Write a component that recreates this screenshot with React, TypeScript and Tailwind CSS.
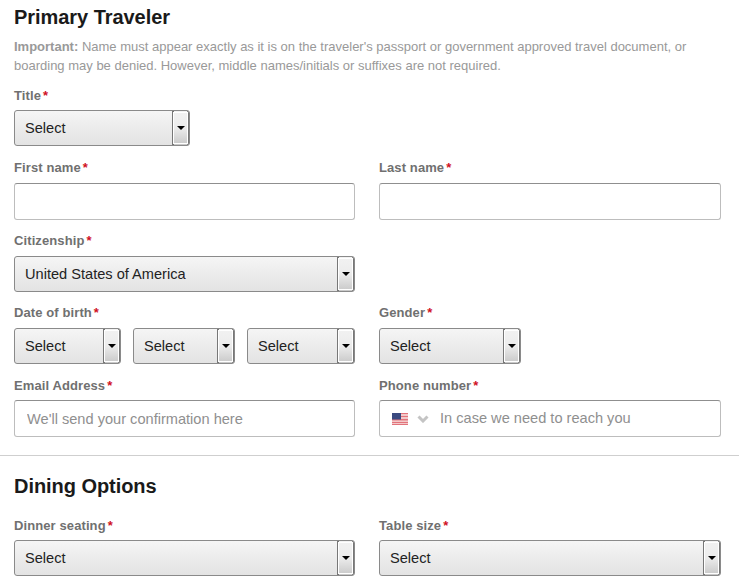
import type { ReactNode } from 'react'

function Label({ children }: { children: ReactNode }) {
  return (
    <div className="h-[16px] text-[13px] leading-[18px] font-bold tracking-[0.1px] text-[#707070]">
      {children}
      <span className="ml-[2px] text-[#d0101f]">*</span>
    </div>
  )
}

function Select({ value = 'Select', className = '' }: { value?: string; className?: string }) {
  return (
    <div
      className={`flex h-[36px] items-stretch overflow-hidden rounded-[3px] border border-[#8a8a8a] bg-gradient-to-b from-[#f5f5f5] to-[#e3e3e3] ${className}`}
    >
      <span className="flex-1 pl-[10px] text-[14.6px] leading-[34px] text-[#222]">{value}</span>
      <span className="flex w-[17px] items-center justify-center border-x-2 border-[#fff] border-l-[#777] border-r-[#777] bg-gradient-to-b from-[#f2f2f2] via-[#ececec] to-[#c8c8c8] outline outline-1 -outline-offset-2 outline-white">
        <span className="h-0 w-0 border-x-[4px] border-t-[4px] border-x-transparent border-t-black" />
      </span>
    </div>
  )
}

function TextInput({ placeholder }: { placeholder?: string }) {
  return (
    <input
      type="text"
      placeholder={placeholder}
      className="h-[37px] w-full rounded-[3px] border border-[#bdbdbd] border-t-[#8f8f8f] bg-white px-[12px] text-[14.6px] placeholder:text-[#8f8f8f]"
    />
  )
}

function Flag() {
  return (
    <svg width="16" height="12" viewBox="0 0 16 12" className="shrink-0">
      <rect width="16" height="12" fill="#f3c9c9" />
      <rect y="0" width="16" height="1" fill="#e2737b" />
      <rect y="3" width="16" height="1" fill="#e2737b" />
      <rect y="6" width="16" height="1.4" fill="#e2737b" />
      <rect y="9" width="16" height="1" fill="#e2737b" />
      <rect y="11" width="16" height="1" fill="#e2737b" />
      <rect width="9" height="6.5" fill="#3b4a80" />
    </svg>
  )
}

function Chevron() {
  return (
    <svg width="12" height="8" viewBox="0 0 12 8" className="shrink-0">
      <path d="M1.5 1.5 L6 6 L10.500 1.5" fill="none" stroke="#c4c4c4" strokeWidth="3" />
    </svg>
  )
}

export default function App() {
  return (
    <div className="h-[588px] w-[739px] overflow-hidden bg-white font-['Liberation_Sans',Arial,sans-serif]">
      <div className="px-[14px] pt-[5px]">
        <h2 className="text-[20px] leading-[24px] font-bold tracking-[-0.05px] text-[#1a1a1a]">
          Primary Traveler
        </h2>
        <p className="mt-[8px] w-[700px] text-[13px] leading-[19px] text-[#999]">
          <strong>Important:</strong> Name must appear exactly as it is on the traveler's passport or
          government approved travel document, or boarding may be denied. However, middle
          names/initials or suffixes are not required.
        </p>

        <div className="mt-[12px]">
          <Label>Title</Label>
          <Select className="mt-[7px] w-[176px]" />
        </div>

        <div className="mt-[13px] grid grid-cols-[341px_342px] gap-x-[24px]">
          <div>
            <Label>First name</Label>
            <div className="mt-[8px]">
              <TextInput />
            </div>
          </div>
          <div>
            <Label>Last name</Label>
            <div className="mt-[8px]">
              <TextInput />
            </div>
          </div>
        </div>

        <div className="mt-[12px] w-[341px]">
          <Label>Citizenship</Label>
          <Select value="United States of America" className="mt-[8px]" />
        </div>

        <div className="mt-[12px] grid grid-cols-[341px_342px] gap-x-[24px]">
          <div>
            <Label>Date of birth</Label>
            <div className="mt-[8px] flex justify-between">
              <Select className="w-[107px]" />
              <Select className="w-[102px]" />
              <Select className="w-[108px]" />
            </div>
          </div>
          <div>
            <Label>Gender</Label>
            <Select className="mt-[8px] w-[142px]" />
          </div>
        </div>

        <div className="mt-[13px] grid grid-cols-[341px_342px] gap-x-[24px]">
          <div>
            <Label>Email Address</Label>
            <div className="mt-[7px]">
              <TextInput placeholder="We'll send your confirmation here" />
            </div>
          </div>
          <div>
            <Label>Phone number</Label>
            <div className="mt-[7px] flex h-[37px] items-center rounded-[3px] border border-[#bdbdbd] border-t-[#8f8f8f] pl-[12px]">
              <Flag />
              <span className="ml-[9px]">
                <Chevron />
              </span>
              <input
                type="text"
                placeholder="In case we need to reach you"
                className="ml-[11px] min-w-0 flex-1 pt-[1px] text-[14.6px] placeholder:text-[#8f8f8f]"
              />
            </div>
          </div>
        </div>
      </div>

      <div className="mt-[18px] h-px bg-[#cfcfcf]" />

      <div className="px-[14px] pt-[18px]">
        <h2 className="text-[20px] leading-[24px] font-bold tracking-[-0.05px] text-[#1a1a1a]">
          Dining Options
        </h2>
        <div className="mt-[19px] grid grid-cols-[341px_342px] gap-x-[24px]">
          <div>
            <Label>Dinner seating</Label>
            <Select className="mt-[7px]" />
          </div>
          <div>
            <Label>Table size</Label>
            <Select className="mt-[7px]" />
          </div>
        </div>
      </div>
    </div>
  )
}
